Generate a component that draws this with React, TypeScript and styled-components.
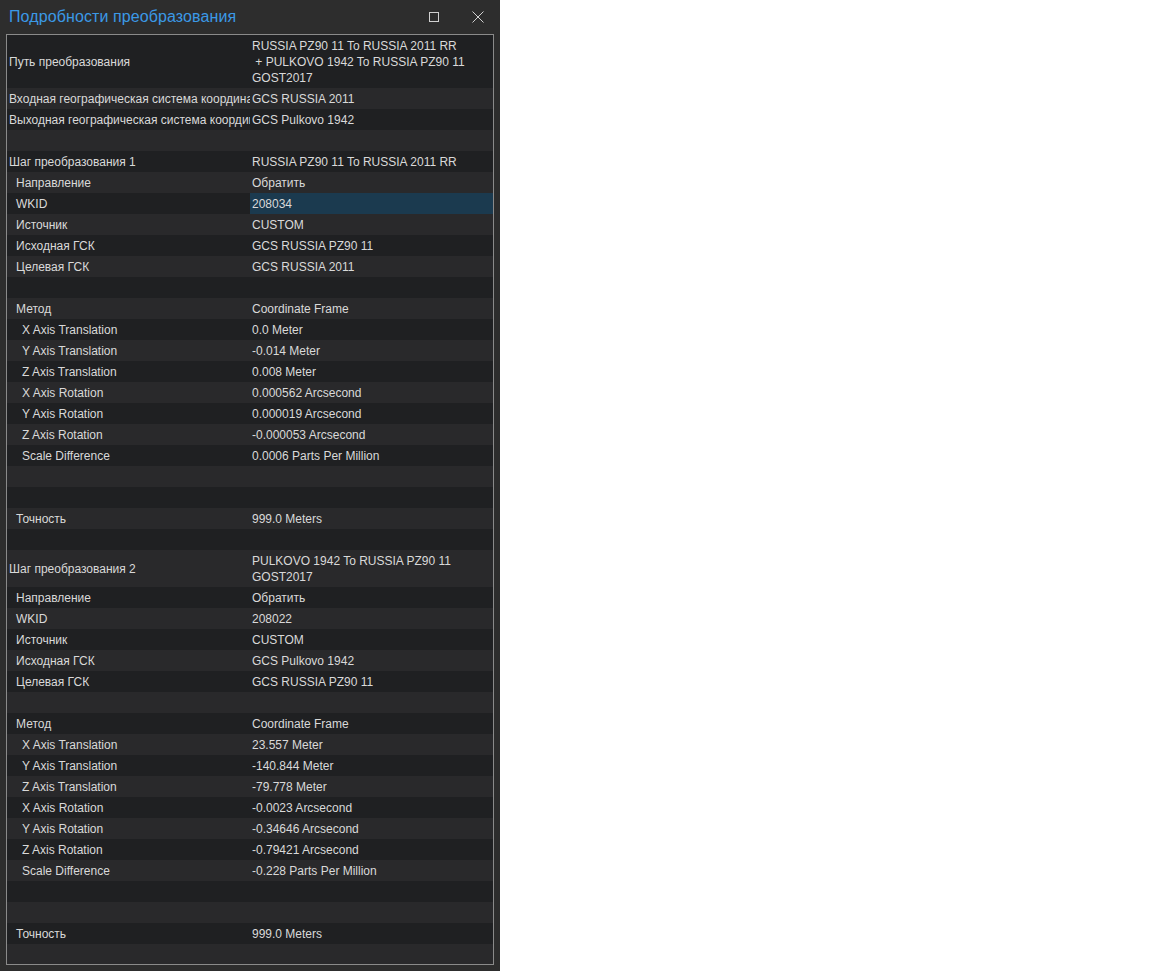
import React from "react";
import styled, { createGlobalStyle } from "styled-components";

const GlobalStyle = createGlobalStyle`
  html, body {
    margin: 0;
    padding: 0;
    background: #ffffff;
  }
  * { box-sizing: border-box; }
`;

const Window = styled.div`
  width: 500px;
  height: 971px;
  background: #2d2d2d;
  display: flex;
  flex-direction: column;
  font-family: "Liberation Sans", Arial, sans-serif;
`;

const TitleBar = styled.div`
  height: 34px;
  display: flex;
  align-items: center;
  padding: 0 0 0 9px;
`;

const Title = styled.h1`
  flex: 1;
  margin: 0;
  font-weight: 400;
  font-size: 16px;
  color: #3b99e6;
  letter-spacing: 0.1px;
`;

const WinButton = styled.button`
  width: 44px;
  height: 34px;
  border: none;
  background: transparent;
  padding: 0;
  display: flex;
  align-items: center;
  justify-content: center;
  color: #d0d0d0;
`;

const Panel = styled.div`
  flex: 1;
  margin: 0 6px 6px 6px;
  border: 1px solid #8a8a8a;
  overflow: hidden;
  background: #242426;
`;

const Row = styled.div<{ $alt: boolean }>`
  display: grid;
  grid-template-columns: 243px 243px;
  background: ${(p) => (p.$alt ? "#29292b" : "#1f2022")};
  color: #d9d9d9;
  font-size: 12px;
  line-height: 16px;
`;

const Label = styled.div<{ $level: number }>`
  padding: 3px 0 2px ${(p) => 2 + p.$level * 7 - (p.$level > 1 ? 1 : 0)}px;
  white-space: nowrap;
  overflow: hidden;
  display: flex;
  align-items: center;
`;

const Value = styled.div<{ $selected?: boolean }>`
  padding: 3px 2px 2px 2px;
  white-space: pre;
  overflow: hidden;
  background: ${(p) => (p.$selected ? "#1b3a4f" : "transparent")};
  min-height: 21px;
`;

type Item = {
  label?: string;
  value?: string;
  level?: number;
  selected?: boolean;
};

const stepParams = (
  dx: string,
  dy: string,
  dz: string,
  rx: string,
  ry: string,
  rz: string,
  ds: string
): Item[] => [
  { label: "Метод", value: "Coordinate Frame", level: 1 },
  { label: "X Axis Translation", value: dx, level: 2 },
  { label: "Y Axis Translation", value: dy, level: 2 },
  { label: "Z Axis Translation", value: dz, level: 2 },
  { label: "X Axis Rotation", value: rx, level: 2 },
  { label: "Y Axis Rotation", value: ry, level: 2 },
  { label: "Z Axis Rotation", value: rz, level: 2 },
  { label: "Scale Difference", value: ds, level: 2 },
  {},
  {},
  { label: "Точность", value: "999.0 Meters", level: 1 },
  {},
];

const items: Item[] = [
  {
    label: "Путь преобразования",
    value:
      "RUSSIA PZ90 11 To RUSSIA 2011 RR\n + PULKOVO 1942 To RUSSIA PZ90 11\nGOST2017",
  },
  { label: "Входная географическая система координат", value: "GCS RUSSIA 2011" },
  { label: "Выходная географическая система координат", value: "GCS Pulkovo 1942" },
  {},
  { label: "Шаг преобразования 1", value: "RUSSIA PZ90 11 To RUSSIA 2011 RR" },
  { label: "Направление", value: "Обратить", level: 1 },
  { label: "WKID", value: "208034", level: 1, selected: true },
  { label: "Источник", value: "CUSTOM", level: 1 },
  { label: "Исходная ГСК", value: "GCS RUSSIA PZ90 11", level: 1 },
  { label: "Целевая ГСК", value: "GCS RUSSIA 2011", level: 1 },
  {},
  ...stepParams(
    "0.0 Meter",
    "-0.014 Meter",
    "0.008 Meter",
    "0.000562 Arcsecond",
    "0.000019 Arcsecond",
    "-0.000053 Arcsecond",
    "0.0006 Parts Per Million"
  ),
  {
    label: "Шаг преобразования 2",
    value: "PULKOVO 1942 To RUSSIA PZ90 11\nGOST2017",
  },
  { label: "Направление", value: "Обратить", level: 1 },
  { label: "WKID", value: "208022", level: 1 },
  { label: "Источник", value: "CUSTOM", level: 1 },
  { label: "Исходная ГСК", value: "GCS Pulkovo 1942", level: 1 },
  { label: "Целевая ГСК", value: "GCS RUSSIA PZ90 11", level: 1 },
  {},
  ...stepParams(
    "23.557 Meter",
    "-140.844 Meter",
    "-79.778 Meter",
    "-0.0023 Arcsecond",
    "-0.34646 Arcsecond",
    "-0.79421 Arcsecond",
    "-0.228 Parts Per Million"
  ),
];

const MaximizeIcon = () => (
  <svg width="11" height="11" viewBox="0 0 11 11" fill="none">
    <rect x="0.5" y="0.5" width="9" height="9" stroke="currentColor" strokeWidth="1" />
  </svg>
);

const CloseIcon = () => (
  <svg width="12" height="12" viewBox="0 0 12 12" fill="none">
    <path d="M0.5 0.5 L11.5 11.5 M11.5 0.5 L0.5 11.5" stroke="currentColor" strokeWidth="1" />
  </svg>
);

export default function App() {
  return (
    <>
      <GlobalStyle />
      <Window>
        <TitleBar>
          <Title>Подробности преобразования</Title>
          <WinButton aria-label="Развернуть">
            <MaximizeIcon />
          </WinButton>
          <WinButton aria-label="Закрыть">
            <CloseIcon />
          </WinButton>
        </TitleBar>
        <Panel>
          {items.map((it, i) => (
            <Row key={i} $alt={i % 2 === 1}>
              <Label $level={it.level ?? 0}>{it.label ?? ""}</Label>
              <Value $selected={it.selected}>{it.value ?? ""}</Value>
            </Row>
          ))}
        </Panel>
      </Window>
    </>
  );
}
